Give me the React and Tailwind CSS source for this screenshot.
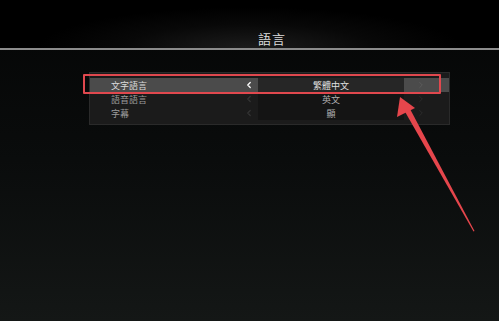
import React from 'react';
import { ChevronLeft, ChevronRight } from 'lucide-react';

const rows = [
    { label: '文字語言', value: '繁體中文', active: true },
    { label: '語音語言', value: '英文' },
    { label: '字幕', value: '顯' },
];

const font = { fontFamily: '"Noto Sans CJK TC", "Noto Sans CJK SC", sans-serif' };

const SettingRow = ({ label, value, active }) => (
    <div className={`flex h-[14px] items-center text-[9px] leading-none ${active ? 'bg-[#4b4b4b]' : ''}`}>
        <div className={`w-[150px] pl-[21px] ${active ? 'text-[#dcdcdc]' : 'text-[#9c9c9c]'}`}>{label}</div>
        <div className={`flex w-[18px] justify-center ${active ? 'text-white' : 'text-[#333]'}`}>
            <ChevronLeft size={10} strokeWidth={3} />
        </div>
        <div
            className={`flex h-full w-[146px] items-center justify-center ${
                active ? 'bg-[#262626] text-[#e0e0e0]' : 'bg-[#141414] text-[#b0b0b0]'
            }`}
        >
            {value}
        </div>
        <div className={`flex w-[34px] justify-center ${active ? 'text-[#5e5e5e]' : 'text-[#2e2e2e]'}`}>
            <ChevronRight size={10} strokeWidth={2} />
        </div>
    </div>
);

export default function App() {
    return (
        <div
            className="relative h-[321px] w-[499px] overflow-hidden bg-gradient-to-b from-[#050606] via-[#0a0c0c] to-[#141716]"
            style={font}
        >
            {/* header */}
            <div className="flex h-[48px] items-end justify-center bg-[radial-gradient(ellipse_at_50%_100%,#1c1c1c_0%,#080808_35%,#000_60%)] pb-[3px]">
                <span className="pl-[45px] text-[13px] leading-none tracking-[1px] text-[#dcdcdc]">語言</span>
            </div>
            <div className="h-[2px] bg-[#8c8c8c]" />

            {/* settings panel */}
            <div className="pt-[22px]">
                <div className="ml-[89px] w-[361px] border border-[#2a2a2a] bg-[#1b1b1b] pb-[4px] pt-[5px]">
                    {rows.map((r) => (
                        <SettingRow key={r.label} {...r} />
                    ))}
                </div>
            </div>

            {/* red highlight annotation */}
            <div className="absolute left-[83px] top-[74px] h-[20px] w-[358px] rounded-[1px] border-2 border-[#e0484e]" />

            {/* red arrow annotation */}
            <svg className="absolute left-0 top-0" width="499" height="321" viewBox="0 0 499 321">
                <polygon points="474.5,231 409,107 404,110 473.5,231.5" fill="#e6464c" />
                <polygon points="400,97 397,117 415,108" fill="#e6464c" />
            </svg>
        </div>
    );
}
